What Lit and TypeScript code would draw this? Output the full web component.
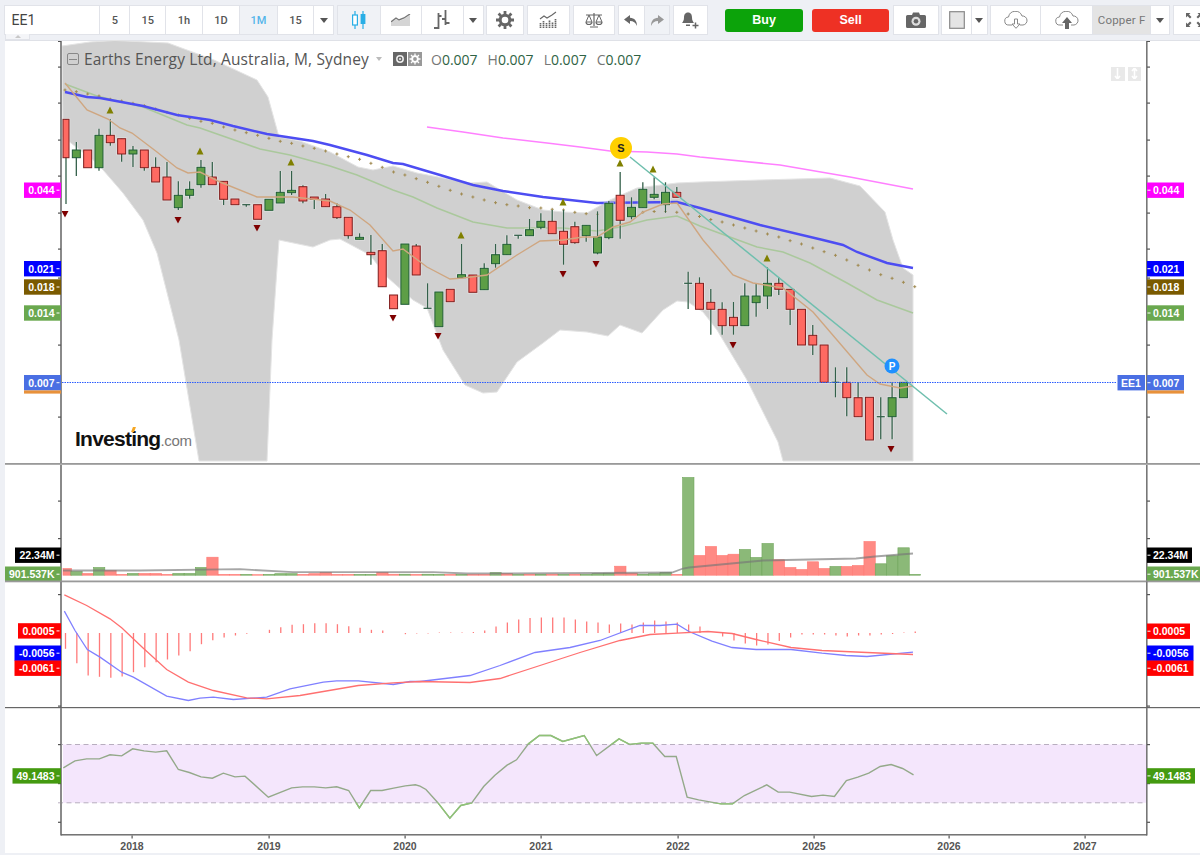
import { LitElement, html, css, svg } from "lit";
import { customElement } from "lit/decorators.js";

type Pt = [number, number];
const X = (i: number) => 65 + 11.33 * i;
const poly = (p: Pt[]) => p.map((q) => q.join(",")).join(" ");

// colour, body top, body bottom, wick top, wick bottom
const CANDLES: [string, number, number, number?, number?][] = [
  ["r",119.3,157.7,119,204],["g",150,157.7,142,176],["r",150,167.7],["g",135.3,167.7,128.7,170.7],["r",135.3,142.7,119.3,145.7],
  ["r",138.7,154,138.7,161.7],["g",150,154,146,167],["r",150,167.7,150,170.7],["r",167.3,182,157.3,182],["r",177,200,162,200],
  ["g",195.3,207.7,181.3,210],["g",189.3,195.3,181.3,198.7],["g",167.3,184.7,160,187.7],["r",177,184.7,162,184.7],["r",181.3,199.3,181.3,205],
  ["r",199,204.7],["g",204.7,204.7,204.7,206.7],["r",204.7,219.3],["g",199.3,210.3],["g",192.3,203,171,203],
  ["g",190.3,192.7,171,195],["r",186.7,201,185.3,203.3],["r",197,199.3,197,209],["r",199,206.7,194,206.7],["r",206.7,217.7,203.3,219],
  ["r",217.3,235.7,217.3,238.7],["g",237.3,239.3,233.3,239.3],["r",252.3,254.7,235,264.7],["r",250.7,286.7,244,286.7],["r",295,308.7],
  ["g",244,304.3],["r",246,275,244,275],["g",308.3,308.3,283.3,308.3],["g",292,326.7],["r",289.3,301.7],
  ["g",274.7,277.7,244,277.7],["r",275,292.3],["g",268.3,289.7,263.3,289.7],["g",254.7,263.7,244,267.7],["g",244.3,254.7,235.3,254.7],
  ["g",235.3,235.3,235.3,238.7],["g",229.7,235.7,219,235.7],["g",221.3,227.3,213.3,229.3],["r",221.3,233.7,210,233.7],["r",231.3,244.3,210,264.7],
  ["r",226.7,242.7,221.7,243.7],["g",225.3,235.7,225.3,241.7],["g",237,253,211.3,254.3],["g",203.3,237.7,201,239.3],["r",195.3,220.3,172,238.7],
  ["g",207.3,216.7,197.3,219.3],["g",189.3,207.7,182.3,207.7],["g",194.3,197.3,177.3,199.3],["g",192.3,204.7,182.3,212.7],["r",192.3,197.3,187,197.3],
  ["g",283.3,283.3,271.7,309],["r",283.3,309.3,277.3,309.3],["r",302.3,309.3,289,334.7],["r",309.3,325.7,302.3,334.7],["r",317.3,325.7,302,334.7],
  ["g",296,325.7,283.3,325.7],["g",296,302.7,283.3,316.7],["g",283.3,296,267.3,309],["r",283.3,289.3,277.3,295],["r",289.3,309.3,289.3,325],
  ["r",309.3,345],["r",335.3,345,325,355],["r",345,382.3],["g",382.3,382.3,367.3,397.3],["r",382.3,397.7,367.3,416.3],
  ["r",397.7,416.7,382.3,416.7],["r",397.3,440],["g",416.7,416.7,397.3,439.3],["g",397.7,416.7,382.3,439.3],["g",382.3,397.7],
];

const CLOUD: Pt[] = [[62,46],[90,42],[115,40.5],[168,43],[214,60],[257,80],[268,97],[279,137],[300,141],[330,152],[358,167],[373,170],[393,166],[417,173],[470,183],[487,182],[517,200],[543,210],[563,212],[587,213],[610,200],[637,188],[677,183],[700,182],[760,180],[830,178],[860,186],[885,212],[893,240],[903,268],[913,275],[913,461],[783,461],[778,442],[747,380],[717,330],[703,312],[688,302],[677,301],[663,310],[642,333],[620,325],[608,336],[587,332],[560,330],[543,343],[517,362],[497,392],[483,393],[465,385],[443,350],[427,308],[413,300],[387,277],[370,255],[340,239],[330,240],[313,247],[279,240],[272,340],[267,461],[199,461],[179,340],[157,253],[143,220],[123,193],[97,163],[63,137]];
const MA_TAN: Pt[] = [[65,83],[87,110],[108,119],[120,128],[132,133],[157,152],[177,168],[188,173],[200,172],[220,182],[257,197],[293,197],[330,201],[350,210],[370,225],[393,251],[403,249],[427,267],[450,279],[463,278],[487,275],[517,255],[540,241],[563,240],[583,237],[597,237],[613,227],[630,222],[643,212],[663,204],[677,203],[703,240],[733,275],[753,283],[783,288],[813,312],[843,347],[867,375],[880,384],[900,388],[913,386]];
const MA_GREEN: Pt[] = [[65,84],[97,96],[143,107],[187,125],[200,128],[260,149],[290,155],[330,166],[357,175],[393,190],[413,197],[437,208],[473,222],[507,228],[537,228],[563,228],[597,231],[620,227],[647,220],[677,216],[700,226],[738,240],[757,247],[783,252],[810,263],[847,283],[877,300],[913,313]];
const MA_BLUE: Pt[] = [[65,92],[87,97],[100,98],[143,106],[177,115],[210,120],[233,126],[267,134],[313,141],[330,145],[367,155],[393,163],[403,164],[440,175],[473,185],[503,191],[543,197],[597,203],[677,202],[700,208],[760,225],[823,240],[843,245],[857,252],[887,263],[913,268]];
const MA_PINK: Pt[] = [[427,127],[463,132],[503,138],[547,143],[580,147],[610,151],[647,152],[677,154],[700,157],[780,165],[850,177],[913,189]];
const DOTS = [90,91.7,94,96,99.3,101,103.3,105.7,109,112.3,115,118.3,121.3,123.3,127,130,132.7,135.3,138.3,141.3,143.3,146,148.3,151,154,156.7,159.3,163.3,167.3,172,175,178.7,182.3,186.3,190.3,194,197,200,202.7,204.7,206,207.7,208,209.3,210,212.3,213.7,214.3,214.7,213.7,213,212.3,211.5,211.5,212.3,214,216.5,219.5,222,225,228,231,234,237,240.7,244,248,251.7,255.3,260,265.3,270,274.7,278.3,282.3,286.7];
const UP: Pt[] = [[110,110],[200,151],[291,162],[461,235],[563,202],[620,163],[653,169],[767,258]];
const DOWN: Pt[] = [[65,214],[178,220],[257,228],[393,318],[438,336],[563,274],[596,264],[733,345],[891,449]];

const VOL: [string, number][] = [["r",6.7],["g",3.7],["r",1.7],["g",7.7],["r",4.7],["r",.7],["g",1.7],["r",1.7],["r",1.7],["r",.7],["g",1.7],["g",1.7],["g",7.7],["r",18],["r",.7],["r",.7],["g",.7],["r",.5],["g",.7],["g",1.5],["g",1.5],["r",.7],["r",1.5],["r",2.7],["r",.7],["r",.7],["g",.7],["g",.7],["r",2.7],["r",1],["g",1],["r",.7],["g",1],["g",.7],["r",.7],["g",.7],["r",.7],["r",.7],["g",2.5],["r",1.5],["g",.7],["r",1],["g",1],["r",1],["g",.7],["r",1],["g",.7],["g",1.5],["g",2],["r",9],["r",2],["g",1],["g",1.5],["g",2.7],["r",.7],["g",97.7],["r",19.7],["r",28.7],["r",19.7],["r",21],["g",25.7],["g",17.7],["g",31.7],["r",15.4],["r",7.7],["r",5.7],["r",13.4],["r",6.7],["g",8.7],["r",8.7],["r",9.7],["r",33.7],["g",11.4],["g",19.4],["g",27.4],["g",.7]];
const VOL_MA: Pt[] = [[63,570],[140,570],[240,568.7],[293,571.7],[433,571.7],[467,573],[600,572.5],[672,572],[683,568],[689,567],[763,560],[856,558],[875,556],[913,553]];

const z8 = (p: Pt[]): Pt[] => p.map(([x, y]) => [x / 3, 575 + y / 3]);
const M_RED: Pt[] = [...z8([[193,58],[260,90],[330,130],[365,157],[430,218],[500,282],[565,320],[640,345],[740,367],[800,370],[900,360],[1075,330],[1180,322],[1260,318]]),[470,682],[500,678],[540,665],[580,652],[620,640],[650,634],[677,632.7],[708,631],[732,633],[756,639],[791,647],[822,650],[867,652],[913,654]];
const M_BLUE: Pt[] = [...z8([[193,107],[225,165],[262,222],[300,245],[365,290],[400,305],[500,362],[565,375],[600,368],[640,365],[700,372],[800,365],[870,340],[970,320],[1010,316],[1075,316],[1180,327],[1230,318],[1260,318]]),[470,675],[500,665],[535,652],[570,647],[600,640],[640,625],[660,625],[677,623.7],[689,631],[712,640.7],[732,647],[756,649],[791,649],[822,652.7],[846,655],[867,656],[913,651.7]];
// histogram end y per month; the base is at 632.5
const HIST = [648.3,662.7,675,676.3,677.3,676,671.7,666.7,661.7,659,655,650.7,643.7,639.7,637,635,633.3,632.5,629.3,626.7,624.3,623.7,622.7,622.7,623.7,625.7,627.3,629.3,630,632.5,633.7,633,633,632,632,632,631.5,630,626,622,619,617.5,617,617,617,619,621,622,624,623,624,622,620,621,622,624,626,632.5,636,640,643,645,644,640.5,637,634,634,634,635,636,635,635,634,633.5,632,631];

const RSI1 = z8([[190,577],[225,556],[260,550],[298,550],[330,538],[365,541],[398,520],[432,526],[467,530],[500,526],[535,582],[568,591],[603,604],[637,608],[670,593],[705,604],[735,602],[805,665],[875,637],[908,634],[943,634],[977,637],[1010,634],[1046,645],[1078,697],[1112,645],[1146,645],[1181,638],[1216,631],[1246,628],[1260,632]]);
const RSI2: Pt[] = [[12,267],[35,305],[60,353],[82,315],[104,307],[128,258],[150,225],[175,194],[194,178],[218,130],[240,105],[263,105],[287,123],[330,105],[355,165],[400,115],[422,132],[445,128],[468,128],[492,168],[515,168],[537,290],[560,298],[605,310],[628,310],[652,285],[697,253],[720,275],[743,275],[787,288],[810,284],[833,288],[857,240],[880,230],[902,218],[925,198],[947,192],[970,204],[992,223]].map(([x, y]) => [420 + x / 2.01, 700 + y / 3] as Pt);

const YEARS: [string, number][] = [["2018",132],["2019",269],["2020",405],["2021",541],["2022",678],["2025",814],["2026",949],["2027",1085]];

/** One coloured price tag on an axis. side: -1 left axis, 1 right axis. */
function tag(side: number, w: number, y: number, fill: string, text: string, extra = false) {
  const x = side < 0 ? 61 - w : 1147;
  return svg`<rect x=${x} y=${y} width=${w} height="15.4" fill=${fill} />
    ${extra ? svg`<rect x=${x} y=${y + 15.4} width=${w} height="3.2" fill="#e8913a" />` : ""}
    <rect x=${side < 0 ? 56.5 : 1147.5} y=${y + 7.2} width="3" height="1" fill="#fff" />
    <text class="tag" x=${side < 0 ? 54.5 : 1153} y=${y + 11.5} text-anchor=${side < 0 ? "end" : "start"}>${text}</text>`;
}
function ticks(ys: number[]) {
  return ys.map((y) => svg`<rect x="58" y=${y - 0.5} width="3" height="1.2" fill="#555" /><rect x="1147" y=${y - 0.5} width="3" height="1.2" fill="#555" />`);
}
function axes(y1: number, y2: number) {
  return svg`<rect x="60" y=${y1} width="2" height=${y2 - y1} fill="#8a8a8a" /><rect x="1146" y=${y1} width="1.6" height=${y2 - y1} fill="#777" />`;
}

const ICONS = {
  candle: svg`<svg width="16" height="20" viewBox="0 0 16 20"><path d="M4 1v4M4 15v4M12 1v3M12 14v5" stroke="#29aee6" stroke-width="1.2" fill="none"/><rect x="1.6" y="5" width="4.8" height="10" fill="#fff" stroke="#29aee6" stroke-width="1.2"/><rect x="9.6" y="4" width="4.8" height="10" fill="#29aee6"/></svg>`,
  area: svg`<svg width="20" height="12" viewBox="0 0 20 12"><path d="M0 9l5-4 3 2 5-2 6-4v11H0z" fill="#d5d5d5"/><path d="M0 8l5-4 3 2 5-2 6-4" fill="none" stroke="#777" stroke-width="1.4"/></svg>`,
  bars: svg`<svg width="18" height="22" viewBox="0 0 18 22"><path d="M5.5 4v16M12.5 1v15M1 19h4.5M5.5 7h3M9 10h3.5M12.5 14h4" stroke="#666" stroke-width="1.8" fill="none"/></svg>`,
  gear: svg`<svg width="18" height="18" viewBox="0 0 18 18"><circle cx="9" cy="9" r="4.8" fill="none" stroke="#666" stroke-width="3"/><path d="M9 0v4M9 14v4M0 9h4M14 9h4M2.6 2.6l2.8 2.8M12.6 12.6l2.8 2.8M15.4 2.6l-2.8 2.8M5.4 12.6l-2.8 2.8" stroke="#666" stroke-width="2.8"/></svg>`,
  ind: svg`<svg width="18" height="18" viewBox="0 0 18 18"><path d="M1.5 17v-5M4.5 17v-7M7.5 17v-5M10.5 17v-8M13.5 17v-6M16.5 17v-9" stroke="#666" stroke-width="1.7" stroke-dasharray="1.4 .6"/><path d="M1 8l4-3 3 2 5-3 4-3" fill="none" stroke="#666" stroke-width="1.1"/></svg>`,
  scale: svg`<svg width="18" height="16" viewBox="0 0 18 16"><path d="M1 3h16M9 1v13M5 15h8" stroke="#666" stroke-width="1.2"/><path d="M4 3L1 10h6zM14 3l-3 7h6z" fill="none" stroke="#666" stroke-width="1"/><path d="M1 10a3 2.5 0 006 0M11 10a3 2.5 0 006 0" fill="none" stroke="#666" stroke-width="1.2"/></svg>`,
  undo: svg`<svg width="14" height="11" viewBox="0 0 14 11"><path d="M6 0L0 4.5 6 9V6c3.5 0 5.5 1.500 7 5 0-5-2.500-8-7-8.200z" fill="#666"/></svg>`,
  redo: svg`<svg width="14" height="11" viewBox="0 0 14 11"><path d="M8 0l6 4.5L8 9V6c-3.5 0-5.5 1.500-7 5 0-5 2.500-8 7-8.200z" fill="#999"/></svg>`,
  bell: svg`<svg width="18" height="18" viewBox="0 0 18 18"><path d="M7 1.500c3 0 4 2.500 4 5 0 3 1 4 2 5.500H1c1-1.500 2-2.500 2-5.500 0-2.500 1-5 4-5z" fill="#666"/><path d="M5 13.500h4V15H5z" fill="#666"/><path d="M11.500 14.500h6M14.500 11.500v6" stroke="#666" stroke-width="1.5"/></svg>`,
  camera: svg`<svg width="20" height="16" viewBox="0 0 20 16"><path d="M1.500 3H6l1-2.500h6L14 3h4.500A1.500 1.500 0 0120 4.500v10a1.500 1.500 0 01-1.500 1.500h-17A1.500 1.500 0 010 14.500v-10A1.500 1.500 0 011.500 3z" fill="#666"/><circle cx="10" cy="9.200" r="4.500" fill="#ddd"/><circle cx="10" cy="9.200" r="2.300" fill="#666"/></svg>`,
  swatch: svg`<svg width="16" height="18" viewBox="0 0 16 18"><rect x=".7" y=".7" width="14.6" height="16.6" fill="#e4e4e4" stroke="#888" stroke-width="1.2"/></svg>`,
  cloudDown: svg`<svg width="24" height="18" viewBox="0 0 24 18"><path d="M8 14H5a4 4 0 01-.5-8A7 7 0 0118 5a4.500 4.500 0 011 9h-3" fill="none" stroke="#888"/><path d="M10.500 8h3v5h2.500L12 17.300 8 13h2.500z" fill="#fff" stroke="#888"/></svg>`,
  cloudUp: svg`<svg width="24" height="18" viewBox="0 0 24 18"><path d="M8 14H5a4 4 0 01-.5-8A7 7 0 0118 5a4.500 4.500 0 011 9h-3" fill="none" stroke="#888"/><path d="M10 18v-6H7l5-6 5 6h-3v6z" fill="#666"/></svg>`,
  full: svg`<svg width="16" height="14" viewBox="0 0 16 14"><path d="M0 0h4.500L3 1.500 5.500 4 4 5.500 1.500 3 0 4.500zM16 0h-4.500L13 1.500 10.500 4 12 5.500 14.500 3 16 4.500zM0 14h4.500L3 12.500 5.500 10 4 8.500 1.500 11 0 9.500zM16 14h-4.500l1.500-1.500-2.500-2.500L12 8.500l2.500 2.500L16 9.500z" fill="#666"/></svg>`,
  eye: svg`<svg width="14" height="14" viewBox="0 0 14 14"><rect width="14" height="14" fill="#666"/><circle cx="7" cy="7" r="3.200" fill="none" stroke="#eee" stroke-width="1.5"/><circle cx="7" cy="7" r="1" fill="#eee"/></svg>`,
  gearBox: svg`<svg width="14" height="14" viewBox="0 0 14 14"><rect width="14" height="14" fill="#999"/><circle cx="7" cy="7" r="2.800" fill="none" stroke="#fff" stroke-width="1.8"/><path d="M7 1.500v2.500M7 10v2.500M1.500 7H4M10 7h2.500M3 3l1.700 1.700M9.300 9.300L11 11M11 3L9.300 4.700M4.700 9.300L3 11" stroke="#fff" stroke-width="1.3"/></svg>`,
};

@customElement("app-root")
export class AppRoot extends LitElement {
  static styles = css`
    :host { display: block; width: 1200px; height: 855px; overflow: hidden; background: #eef0f5; font-family: "Roboto", "Liberation Sans", sans-serif; }
    .toolbar { display: flex; gap: 4.7px; height: 28px; padding: 6px 0 0 4.5px; width: 1300px; align-items: stretch; }
    .group { display: flex; background: #fff; box-shadow: 0 0 0 1px #e1e3e9; }
    .btn { display: flex; align-items: center; justify-content: center; border-left: 1px solid #e1e3e9; color: #555; font-size: 11px; font-weight: 500; box-sizing: border-box; height: 100%; }
    .btn:first-child { border-left: 0; }
    .btn.active { background: #f0f2f6; color: #53b5ea; }
    .btn.off { background: #f0f2f6; }
    .btn.sym { justify-content: flex-start; padding-left: 7px; font-size: 14px; font-weight: 400; color: #444; }
    .btn.copper { background: #e4e4e4; color: #777; font-size: 11.5px; font-weight: 400; letter-spacing: .2px; }
    .caret { width: 0; height: 0; border: 4px solid transparent; border-top: 5px solid #555; border-bottom: 0; }
    .trade { display: flex; align-items: center; justify-content: center; align-self: center; height: 23px; border-radius: 3px; color: #fff; font-size: 12.5px; font-weight: 700; font-family: "Liberation Sans", sans-serif; }
    .buy { background: #0ca30a; margin-left: 14.1px; width: 77.5px; }
    .sell { background: #ee3124; margin-left: 4.7px; width: 76.6px; }
    .strip { display: flex; height: 6px; margin-left: 4.5px; }
    .tab { width: 25px; background: #f4f5f8; border: 1px solid #e1e3e9; border-top: 0; box-sizing: border-box; position: relative; }
    .tab::after { content: ""; position: absolute; left: 9px; top: 1px; border: 3px solid transparent; border-bottom: 3px solid #c8c8c8; border-top: 0; }
    .chart { margin-left: 5px; width: 1195px; background: #fff; position: relative; border-top: 1px solid #dfe1e7; height: 813px; box-sizing: border-box; display: flex; flex-direction: column; }
    .pane { display: block; overflow: visible; flex: none; }
    .tag { font: 700 10.5px "Liberation Sans", sans-serif; fill: #fff; }
    .year { font: 700 10.5px "Liberation Sans", sans-serif; fill: #555; }
    .legend { position: absolute; left: 62px; top: 9px; display: flex; align-items: center; height: 18px; font-family: "Open Sans", "Liberation Sans", sans-serif; white-space: nowrap; }
    .collapse { width: 12px; height: 12px; border: 1px solid #888; border-radius: 2px; box-sizing: border-box; background: linear-gradient(#888,#888) center/8px 1px no-repeat; margin-right: 5px; }
    .name { font-size: 15.5px; color: #555; letter-spacing: .13px; width: 288px; }
    .lcaret { border: 3.5px solid transparent; border-top: 4px solid #bbb; border-bottom: 0; margin: 0 11px 0 4px; width: 0; height: 0; }
    .icons { display: flex; gap: 1px; margin-right: 9px; }
    .icons svg { display: block; }
    .ohlc { display: flex; gap: 10px; font-size: 14px; color: #777; }
    .ohlc b { font-weight: 400; color: #2f6345; }
    .logo { position: absolute; left: 70px; top: 386px; font: 700 21px "Liberation Sans", sans-serif; letter-spacing: -.75px; color: #111; display: flex; align-items: baseline; }
    .logo span { font-weight: 400; font-size: 15px; letter-spacing: -.3px; color: #777; }
    .logo i { position: absolute; left: 57px; top: 0; width: 3px; height: 5px; background: #f5a623; transform: skewX(-20deg); }
    .scalers { position: absolute; left: 1106px; top: 26px; display: flex; gap: 3px; }
    .scalers div { width: 13.5px; height: 13.5px; background: #e9e9e9; display: flex; align-items: center; justify-content: center; }
  `;

  private btn(w: number, content: unknown, cls = "") {
    return html`<div class="btn ${cls}" style="width:${w}px">${content}</div>`;
  }

  private main() {
    return svg`<svg class="pane" width="1195" height="423.5" viewBox="5 41 1195 423.5">
      <polygon points=${poly(CLOUD)} fill="#d0d0d0" stroke="#e4e4e4" stroke-width="1" />
      <polyline points=${poly(MA_GREEN)} fill="none" stroke="#aac89c" stroke-width="1.5" />
      <polyline points=${poly(MA_PINK)} fill="none" stroke="#ff80ff" stroke-width="1.6" />
      ${DOTS.map((y, i) => svg`<path d="M${X(i) - 1.5} ${y}h3M${X(i)} ${y - 1.5}v3" stroke="#a08a50" stroke-width="1" />`)}
      <polyline points=${poly(MA_BLUE)} fill="none" stroke="#4d4df2" stroke-width="2.4" />
      ${CANDLES.map((c, i) => {
        const [col, top, bot, hi, lo] = c;
        const x = i === 0 ? 66 : X(i);
        const w = i === 0 ? 6 : 8;
        const fill = col === "r" ? "#ff6a62" : "#5d9e46";
        const edge = col === "r" ? "#7f1d1d" : "#1f5c36";
        return svg`
          <rect x=${x - w / 2 - 1.2} y=${top - 1.2} width=${w + 2.4} height=${bot - top + 2.4} fill="#fff" opacity=".45" />
          ${hi !== undefined ? svg`<rect x=${x - 1.4} y=${hi} width="2.8" height=${lo! - hi} fill="#fff" opacity=".4" /><line x1=${x} x2=${x} y1=${hi} y2=${lo!} stroke="#34604a" stroke-width="1.3" />` : ""}
          ${bot > top
            ? svg`<rect x=${x - w / 2} y=${top} width=${w} height=${bot - top} fill=${fill} stroke=${edge} stroke-width="1" />`
            : svg`<line x1=${x - 4} x2=${x + 4} y1=${top} y2=${top} stroke="#34604a" stroke-width="1.3" />`}`;
      })}
      <polyline points=${poly(MA_TAN)} fill="none" stroke="#cfa680" stroke-width="1.4" />
      <line x1="630" y1="157" x2="947" y2="414" stroke="#6fbfae" stroke-width="1.5" />
      ${UP.map(([x, y]) => svg`<polygon points="${x - 3.5},${y + 3.5} ${x + 3.5},${y + 3.5} ${x},${y - 3.5}" fill="#808000" />`)}
      ${DOWN.map(([x, y]) => svg`<polygon points="${x - 3.5},${y - 3} ${x + 3.5},${y - 3} ${x},${y + 3.5}" fill="#7f0000" />`)}
      <line x1="62" x2="1117" y1="382.5" y2="382.5" stroke="#2a5cff" stroke-width="1" stroke-dasharray="1.5 1" />
      <circle cx="621" cy="148" r="11" fill="#ffd000" />
      <text x="621" y="152" text-anchor="middle" style="font:700 11px 'Liberation Sans',sans-serif" fill="#222">S</text>
      <circle cx="892" cy="366" r="7.5" fill="#1e90ff" />
      <text x="892" y="369.8" text-anchor="middle" style="font:700 10px 'Liberation Sans',sans-serif" fill="#fff">P</text>
      ${axes(41, 463)}
      ${ticks([67, 103, 140, 176, 213, 249, 278, 313, 345, 417])}
      <path d="M58 41.5h3M1147 41.5h3" stroke="#555" />
      ${tag(-1, 37, 182.5, "#ff00ff", "0.044")}
      ${tag(-1, 37, 261, "#0000ff", "0.021")}
      ${tag(-1, 37, 279.3, "#7a5a00", "0.018")}
      ${tag(-1, 37, 305.3, "#6aa84f", "0.014")}
      ${tag(-1, 37, 375, "#4a6fe3", "0.007", true)}
      ${tag(1, 37, 182.5, "#ff00ff", "0.044")}
      ${tag(1, 37, 261, "#0000ff", "0.021")}
      ${tag(1, 37, 279.3, "#7a5a00", "0.018")}
      ${tag(1, 37, 305.3, "#6aa84f", "0.014")}
      ${tag(1, 37, 375, "#4a6fe3", "0.007", true)}
      <rect x="1117.5" y="375" width="27.5" height="15.4" fill="#4a6fe3" />
      <text class="tag" x="1121" y="386.5">EE1</text>
      <rect x="5" y="463" width="1195" height="1.8" fill="#999" />
    </svg>`;
  }

  private volume() {
    return svg`<svg class="pane" width="1195" height="116" viewBox="5 464.5 1195 116">
      ${VOL.map(([c, h], i) => {
        const x = X(i) - 4.5;
        return svg`<rect x=${i === 0 ? 63 : x - 1} y=${574.7 - h} width=${i === 0 ? 8.5 : 11.33} height=${h} fill=${c === "r" ? "#ff8a84" : "#8bb978"} stroke=${c === "r" ? "#ff7a74" : "#6fa55a"} stroke-width=".6" />`;
      })}
      <polyline points=${poly(VOL_MA)} fill="none" stroke="#777" stroke-opacity=".65" stroke-width="1.8" />
      ${axes(464.5, 581)}
      ${ticks([500.5, 538])}
      ${tag(-1, 46, 547, "#000", "22.34M")}
      ${tag(-1, 56, 566, "#6aa84f", "901.537K")}
      ${tag(1, 45, 547, "#000", "22.34M")}
      ${tag(1, 53, 566, "#6aa84f", "901.537K")}
    </svg>`;
  }

  private macd() {
    return svg`<svg class="pane" width="1195" height="127" viewBox="5 580.5 1195 127">
      <rect x="5" y="580" width="1195" height="1.8" fill="#999" />
      ${HIST.map((y, i) => svg`<line x1=${X(i) + 0.5} x2=${X(i) + 0.5} y1="632.5" y2=${y} stroke="#ff7a7a" stroke-width="1.3" />`)}
      <polyline points=${poly(M_BLUE)} fill="none" stroke="#8080ff" stroke-width="1.3" />
      <polyline points=${poly(M_RED)} fill="none" stroke="#ff7070" stroke-width="1.3" />
      ${axes(581, 707)}
      ${ticks([594, 705.5])}
      ${tag(-1, 43, 622.7, "#ff0000", "0.0005")}
      ${tag(-1, 46.5, 645, "#0000ff", "-0.0056")}
      ${tag(-1, 46.5, 660, "#ff0000", "-0.0061")}
      ${tag(1, 43, 623, "#ff0000", "0.0005")}
      ${tag(1, 46.5, 645, "#0000ff", "-0.0056")}
      ${tag(1, 46.5, 660, "#ff0000", "-0.0061")}
      <rect x="5" y="706.5" width="1195" height="1.2" fill="#666" />
    </svg>`;
  }

  private rsi() {
    const line = poly([...RSI1, ...RSI2]);
    return svg`<svg class="pane" width="1195" height="146" viewBox="5 707.5 1195 146">
      <defs>
        <clipPath id="rsi-out"><rect x="60" y="708" width="1086" height="36" /><rect x="60" y="802.3" width="1086" height="32" /></clipPath>
      </defs>
      <rect x="63" y="744" width="1083" height="58.3" fill="#f4e6fc" />
      <path d="M58 744H1146M58 802.3H1146" stroke="#b8aebf" stroke-width="1" stroke-dasharray="5 3.5" />
      <polyline points=${line} fill="none" stroke="#94a98a" stroke-width="1.4" />
      <polyline points=${line} fill="none" stroke="#8fc377" stroke-width="1.4" clip-path="url(#rsi-out)" />
      ${axes(707.5, 835)}
      <rect x="61" y="833.6" width="1086" height="1.4" fill="#666" />
      ${ticks([744, 783, 821.7])}
      ${tag(-1, 48.5, 767.7, "#449a10", "49.1483")}
      ${tag(1, 48, 767.7, "#449a10", "49.1483")}
      ${YEARS.map(([t, x]) => svg`<rect x=${x - 0.5} y="835" width="1.2" height="3" fill="#555" /><text class="year" x=${x} y="849" text-anchor="middle">${t}</text>`)}
    </svg>`;
  }

  render() {
    const caret = html`<div class="caret"></div>`;
    return html`
      <div class="toolbar">
        <div class="group">
          ${this.btn(94.8, "EE1", "sym")}
          ${this.btn(30, "5")}${this.btn(36, "15")}${this.btn(36.5, "1h")}${this.btn(37.5, "1D")}${this.btn(37.5, "1M", "active")}${this.btn(36.5, "15")}${this.btn(20, caret)}
        </div>
        <div class="group">
          ${this.btn(41.7, ICONS.candle, "active")}${this.btn(41.6, ICONS.area)}${this.btn(41.4, ICONS.bars)}${this.btn(20, caret)}
        </div>
        <div class="group">${this.btn(35.9, ICONS.gear)}</div>
        <div class="group">${this.btn(41, ICONS.ind)}</div>
        <div class="group">${this.btn(40.3, ICONS.scale)}</div>
        <div class="group">${this.btn(25, ICONS.undo)}${this.btn(25.3, ICONS.redo, "off")}</div>
        <div class="group">${this.btn(33, ICONS.bell)}</div>
        <div class="trade buy">Buy</div>
        <div class="trade sell">Sell</div>
        <div class="group">${this.btn(44, ICONS.camera)}</div>
        <div class="group">${this.btn(29, ICONS.swatch)}${this.btn(15.3, caret)}</div>
        <div class="group">
          ${this.btn(49.3, ICONS.cloudDown)}${this.btn(51.3, ICONS.cloudUp)}${this.btn(58.7, "Copper F", "copper")}${this.btn(18.6, caret)}
        </div>
        <div class="group">${this.btn(40, ICONS.full)}</div>
      </div>
      <div class="strip"><div class="tab"></div></div>
      <div class="chart">
        ${this.main()}${this.volume()}${this.macd()}${this.rsi()}
        <div class="legend">
          <div class="collapse"></div>
          <div class="name">Earths Energy Ltd, Australia, M, Sydney</div>
          <div class="lcaret"></div>
          <div class="icons">${ICONS.eye}${ICONS.gearBox}</div>
          <div class="ohlc">
            <span>O<b>0.007</b></span><span>H<b>0.007</b></span><span>L<b>0.007</b></span><span>C<b>0.007</b></span>
          </div>
        </div>
        <div class="logo">Investing<span>.com</span><i></i></div>
        <div class="scalers">
          <div><svg width="7" height="11" viewBox="0 0 7 11"><path d="M3.5 0v11M3.5 11L1 8M3.5 11L6 8" stroke="#fff" stroke-width="1.6" fill="none"/></svg></div>
          <div><svg width="7" height="11" viewBox="0 0 7 11"><path d="M3.5 0v11M3.5 0L1 3M3.5 0L6 3M3.5 11L1 8M3.5 11L6 8" stroke="#fff" stroke-width="1.6" fill="none"/></svg></div>
        </div>
      </div>
    `;
  }
}
